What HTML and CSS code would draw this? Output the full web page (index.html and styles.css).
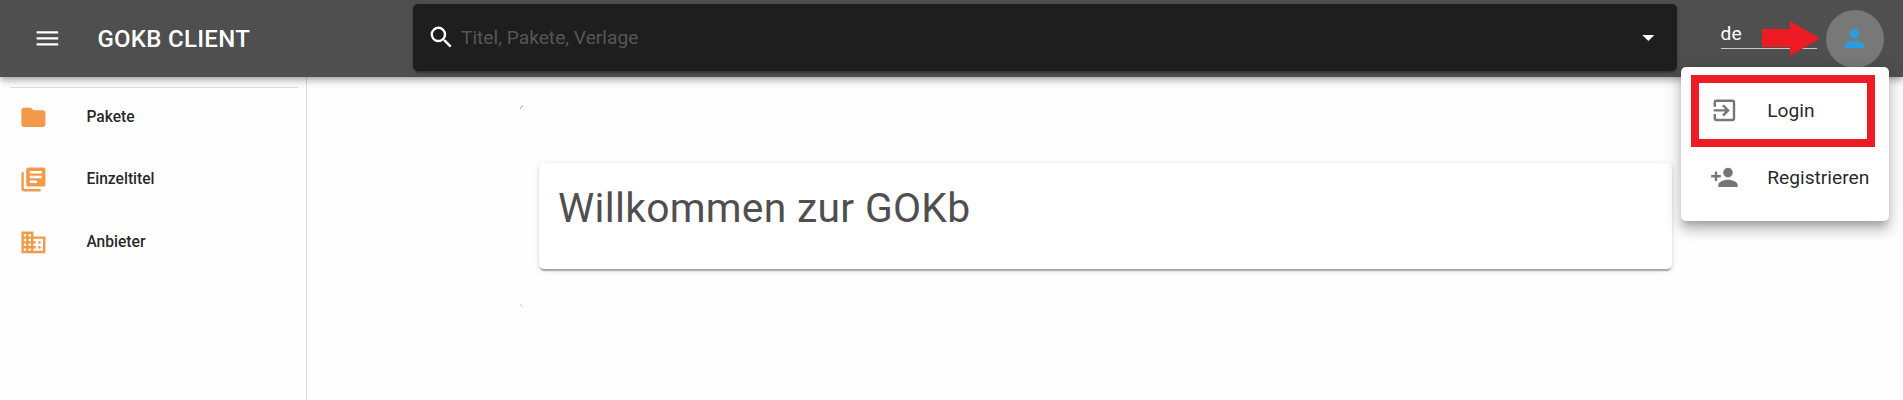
FILE: index.html
```html
<!DOCTYPE html>
<html lang="de">
<head>
<meta charset="utf-8">
<title>GOKB Client</title>
<link rel="stylesheet" href="styles.css">
</head>
<body>
<header class="bar">
  <svg class="icon burger" viewBox="0 0 24 24"><path d="M3 18h18v-2H3v2zm0-5h18v-2H3v2zm0-7v2h18V6H3z"/></svg>
  <div class="brand">GOKB CLIENT</div>
  <div class="search">
    <svg class="icon" viewBox="0 0 24 24"><path d="M15.5 14h-.79l-.28-.27A6.47 6.47 0 0 0 16 9.5 6.5 6.5 0 1 0 9.500 16c1.610 0 3.090-.59 4.230-1.570l.27.28v.79l5 4.990L20.490 19l-4.990-5zm-6 0C7.010 14 5 11.990 5 9.500S7.010 5 9.500 5 14 7.010 14 9.500 11.990 14 9.500 14z"/></svg>
    <span class="placeholder">Titel, Pakete, Verlage</span>
    <svg class="icon" viewBox="0 0 24 24"><path d="M7 10l5 5 5-5z"/></svg>
  </div>
  <div class="lang">de
    <svg class="arrow" viewBox="0 0 58 35"><path d="M0 8h28V0l30 17.500L28 35v-9H0z"/></svg>
  </div>
  <div class="avatar">
    <svg class="icon" viewBox="0 0 24 24"><path d="M12 12a4 4 0 1 0 0-8 4 4 0 0 0 0 8zm0 2c-4.420 0-8 1.790-8 4v2h16v-2c0-2.210-3.580-4-8-4z"/></svg>
  </div>
  <div class="menu">
    <div class="menu-item">
      <svg class="icon" viewBox="0 0 24 24"><path d="M10.090 15.590L11.500 17l5-5-5-5-1.410 1.410L12.670 11H3v2h9.670l-2.580 2.590zM19 3H5a2 2 0 0 0-2 2v4h2V5h14v14H5v-4H3v4a2 2 0 0 0 2 2h14c1.100 0 2-.9 2-2V5c0-1.100-.9-2-2-2z"/></svg>
      <span>Login</span>
    </div>
    <div class="menu-item">
      <svg class="icon" viewBox="0 0 24 24"><path d="M15 12a4 4 0 1 0 0-8 4 4 0 0 0 0 8zm-9-2V7H4v3H1v2h3v3h2v-3h3v-2H6zm9 4c-2.670 0-8 1.340-8 4v2h16v-2c0-2.660-5.330-4-8-4z"/></svg>
      <span>Registrieren</span>
    </div>
    <div class="highlight"></div>
  </div>
</header>
<div class="page">
  <nav class="side">
    <a class="nav-item"><svg class="icon" viewBox="0 0 24 24"><path d="M10 4H4c-1.100 0-1.990.9-1.990 2L2 18c0 1.100.9 2 2 2h16c1.100 0 2-.9 2-2V8c0-1.100-.9-2-2-2h-8l-2-2z"/></svg>Pakete</a>
    <a class="nav-item"><svg class="icon" viewBox="0 0 24 24"><path d="M4 6H2v14c0 1.100.9 2 2 2h14v-2H4V6zm16-4H8c-1.100 0-2 .9-2 2v12c0 1.100.9 2 2 2h12c1.100 0 2-.9 2-2V4c0-1.100-.9-2-2-2zm-1 9H9V9h10v2zm-4 4H9v-2h6v2zm4-8H9V5h10v2z"/></svg>Einzeltitel</a>
    <a class="nav-item"><svg class="icon" viewBox="0 0 24 24"><path d="M12 7V3H2v18h20V7H12zM6 19H4v-2h2v2zm0-4H4v-2h2v2zm0-4H4V9h2v2zm0-4H4V5h2v2zm4 12H8v-2h2v2zm0-4H8v-2h2v2zm0-4H8V9h2v2zm0-4H8V5h2v2zm10 12h-8v-2h2v-2h-2v-2h2v-2h-2V9h8v10zm-2-8h-2v2h2v-2zm0 4h-2v2h2v-2z"/></svg>Anbieter</a>
  </nav>
  <main class="content">
    <svg class="corner" viewBox="0 0 3 3"><path d="M.5 3V1.500L1.500.5H3"/></svg>
    <section class="card"><h1>Willkommen zur GOKb</h1></section>
    <svg class="corner faint" viewBox="0 0 3 3"><path d="M.5 0v1.500l1 1H3"/></svg>
  </main>
</div>
</body>
</html>
```

FILE: styles.css
```css
* { box-sizing: border-box; }
body {
  margin: 0;
  height: 400px;
  overflow: hidden;
  background: #fefefe;
  color: rgba(0, 0, 0, .87);
  font-family: Roboto, "Liberation Sans", sans-serif;
}
.icon { display: block; flex: none; width: 28.8px; height: 28.8px; fill: currentColor; }
.bar {
  position: relative;
  z-index: 2;
  display: flex;
  align-items: center;
  height: 77px;
  padding: 0 18.6px 0 33.2px;
  background: #4f4f4f;
  color: #fff;
  box-shadow: 0 2px 5px -1px rgba(0,0,0,.2), 0 5px 6px rgba(0,0,0,.14), 0 1px 12px rgba(0,0,0,.12);
}
.brand { flex: none; width: 315.6px; margin-left: 35.4px; font-size: 24px; font-weight: 500; line-height: 30px; letter-spacing: .3px; white-space: nowrap; }
.search {
  display: flex;
  flex: none;
  align-items: center;
  width: 1264px;
  height: 67px;
  margin-bottom: 2px;
  padding: 0 14px;
  border-radius: 5px;
  background: #1e1e1e;
  box-shadow: 0 4px 2px -2px rgba(0,0,0,.2), 0 1px 2px rgba(0,0,0,.14), 0 1px 6px rgba(0,0,0,.12);
}
.placeholder { flex: 1; margin-left: 5.2px; color: #565656; font-size: 19.2px; }
.lang {
  position: relative;
  flex: none;
  width: 96px;
  height: 30px;
  margin: 0 9px 9px 43.6px;
  border-bottom: 1px solid #cacaca;
  font-size: 19.2px;
  line-height: 29px;
}
.arrow { position: absolute; left: 41px; top: 2px; width: 58px; height: 35px; fill: #ed1c24; }
.avatar {
  display: grid;
  flex: none;
  place-items: center;
  width: 58px;
  height: 58px;
  border-radius: 50%;
  background: #787878;
  color: #2d9cdb;
}
.menu {
  position: absolute;
  left: 1681px;
  top: 67px;
  width: 208px;
  height: 154px;
  padding: 10px 0;
  border-radius: 5px;
  background: #fff;
  color: rgba(0,0,0,.87);
  box-shadow: 0 6px 6px -3px rgba(0,0,0,.2), 0 10px 12px 1px rgba(0,0,0,.14), 0 4px 17px 2px rgba(0,0,0,.12);
}
.menu-item { display: flex; align-items: center; gap: 28.4px; height: 67px; padding-left: 29px; font-size: 19.2px; }
.menu-item .icon { color: #757575; }
.highlight { position: absolute; left: 10px; top: 8px; width: 184px; height: 72px; border: 8px solid #ed1c24; }
.page { display: flex; height: 323px; }
.side { flex: none; width: 307px; border-right: 1px solid #dedede; }
.side::before { content: ""; display: block; width: 288px; height: 1px; margin: 10px 0 0 10px; background: #dedede; }
.nav-item { display: flex; align-items: center; gap: 38.4px; height: 62.4px; padding-left: 19.2px; font-size: 15.6px; font-weight: 500; }
.nav-item:first-child { margin-top: -2.2px; }
.nav-item:last-child { margin-top: .6px; }
.nav-item .icon { color: #f2994a; }
.content { flex: 1; padding: 29px 0 0 213px; }
.corner { display: block; width: 3px; height: 3px; fill: none; stroke: #aaa; stroke-width: 1; }
.faint { margin-top: 35px; stroke: #d4d4d4; }
.card {
  width: 1133px;
  height: 106px;
  margin: 54px 0 0 19px;
  padding: 21px 19px;
  border-radius: 5px;
  background: #fff;
  box-shadow: 0 4px 1px -2px rgba(0,0,0,.2), 0 2px 2px rgba(0,0,0,.14), 0 1px 6px rgba(0,0,0,.12);
}
h1 { margin: 0; color: #4f4f4f; font-size: 40.8px; font-weight: 400; line-height: 48px; letter-spacing: .3px; }
```
